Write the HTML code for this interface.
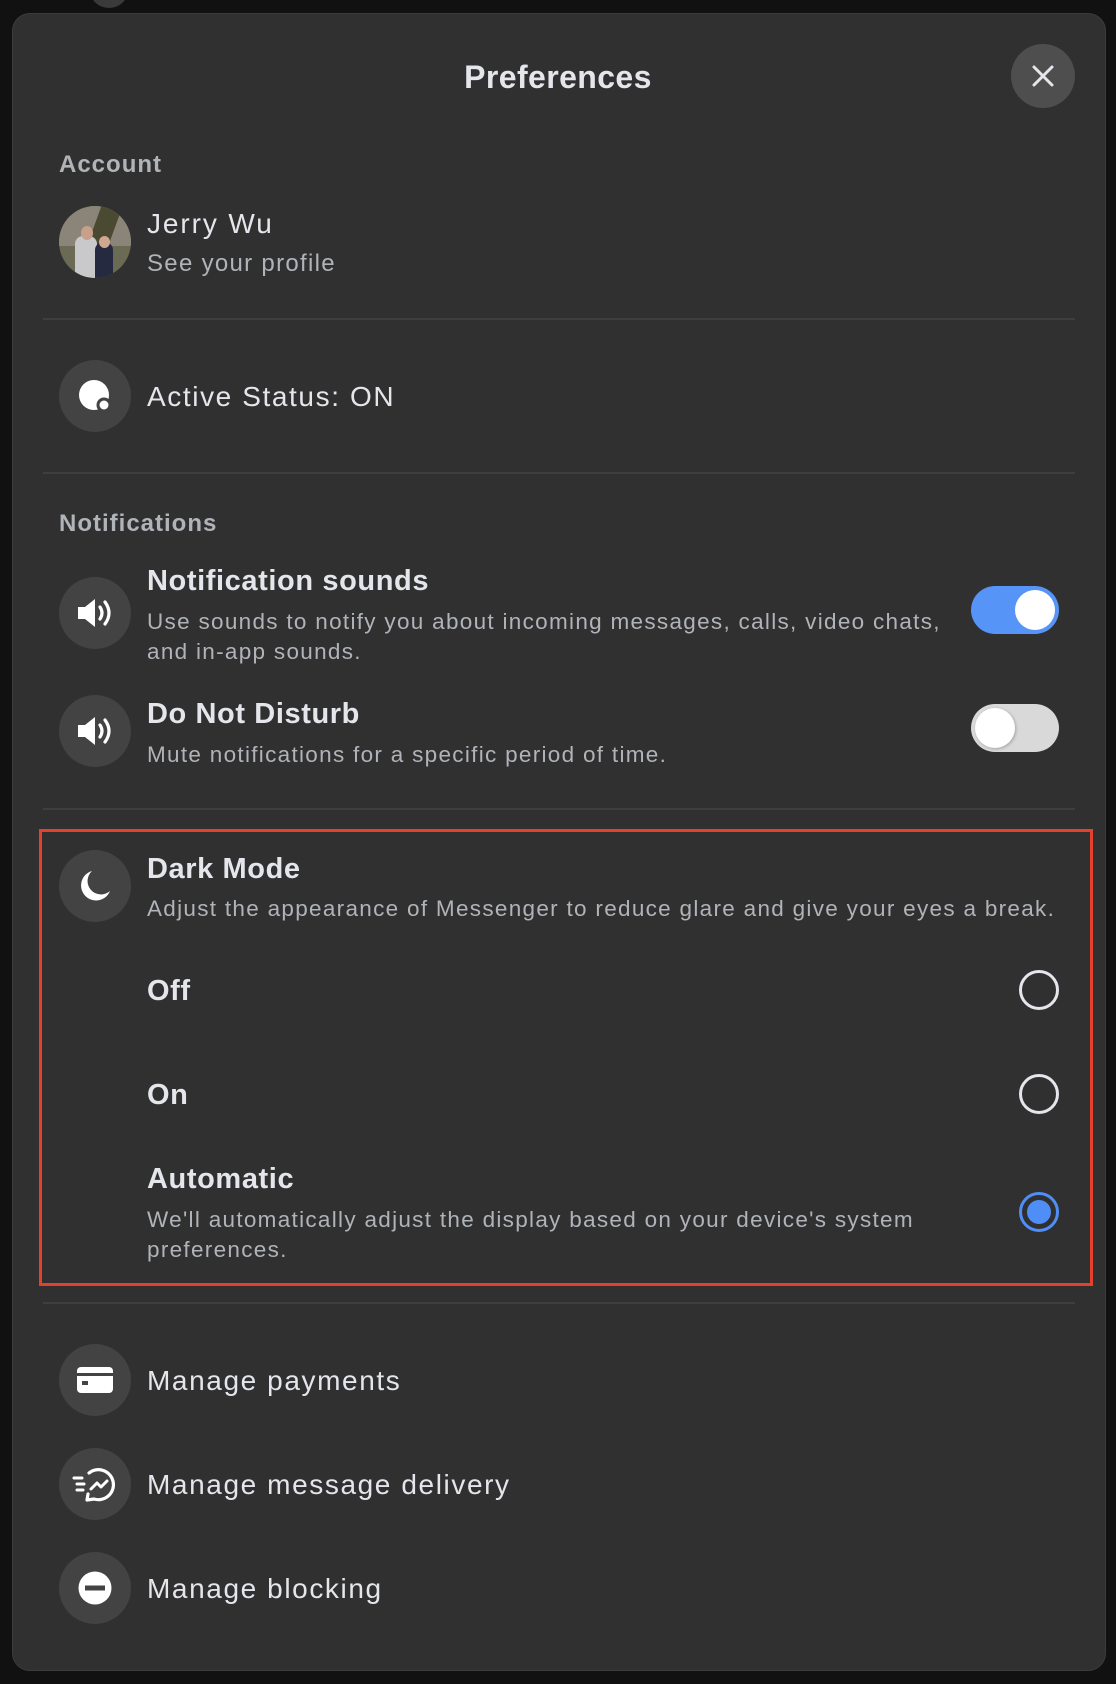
<!DOCTYPE html>
<html><head><meta charset="utf-8"><style>
*{margin:0;padding:0;box-sizing:border-box}
body{width:1116px;height:1684px;background:#111;font-family:"Liberation Sans",sans-serif;color:#e4e6eb;position:relative;overflow:hidden}
.abs{position:absolute}
.panel{left:12px;top:13px;width:1094px;height:1658px;background:#303030;border-radius:18px;border:1px solid #3c3c3c}
.ic{position:absolute;width:72px;height:72px;border-radius:50%;background:#434343;left:59px;display:flex;align-items:center;justify-content:center}
.t{position:absolute;left:147px;white-space:nowrap;line-height:1}
.h{font-size:29px;font-weight:bold;color:#e4e6eb;letter-spacing:0.6px}
.n{font-size:28px;color:#e4e6eb;letter-spacing:1.6px}
.d{font-size:22.5px;color:#b0b3b8;letter-spacing:1.3px}
.sec{font-size:24px;font-weight:bold;color:#b0b3b8;left:59px;letter-spacing:1px}
.div{position:absolute;left:43px;width:1032px;height:2px;background:#3e3e3e}
.radio{position:absolute;left:1019px;width:40px;height:40px;border-radius:50%;border:3px solid #e4e6eb}
</style></head><body>
<div class="abs" style="left:90px;top:-28px;width:38px;height:36px;border-radius:50%;background:#3a3a3a"></div>
<div class="abs panel"></div>

<div class="t" style="left:0;width:1116px;text-align:center;top:61px;font-size:32px;font-weight:bold;color:#e4e6eb;letter-spacing:0.4px">Preferences</div>
<div class="abs" style="left:1011px;top:44px;width:64px;height:64px;border-radius:50%;background:#4e4e4e;display:flex;align-items:center;justify-content:center">
<svg width="24" height="24" viewBox="0 0 24 24"><path d="M3 3L21 21M21 3L3 21" stroke="#e4e6eb" stroke-width="3" stroke-linecap="round"/></svg></div>

<div class="t sec" style="top:153px">Account</div>
<div class="abs" style="left:59px;top:206px;width:72px;height:72px;border-radius:50%;overflow:hidden;background:#6b6a55">
<div class="abs" style="left:0;top:0;width:72px;height:40px;background:#8a8578"></div>
<div class="abs" style="left:30px;top:0;width:20px;height:72px;background:#4a4a32;transform:rotate(20deg)"></div>
<div class="abs" style="left:16px;top:30px;width:22px;height:42px;background:#c9c9cc;border-radius:8px 8px 0 0"></div>
<div class="abs" style="left:22px;top:20px;width:12px;height:14px;background:#c8a08a;border-radius:50%"></div>
<div class="abs" style="left:36px;top:36px;width:18px;height:36px;background:#252a40;border-radius:8px 8px 0 0"></div>
<div class="abs" style="left:40px;top:30px;width:11px;height:12px;background:#d0a890;border-radius:50%"></div>
</div>
<div class="t n" style="top:210px;letter-spacing:1.9px">Jerry Wu</div>
<div class="t d" style="top:252px;font-size:24px">See your profile</div>
<div class="div" style="top:318px"></div>

<div class="ic" style="top:360px"><svg width="36" height="36" viewBox="0 0 36 36"><circle cx="17" cy="17" r="15" fill="#fff"/><circle cx="27" cy="27" r="7.5" fill="#434343"/><circle cx="27" cy="27" r="4.5" fill="#fff"/></svg></div>
<div class="t n" style="top:383px">Active Status: ON</div>
<div class="div" style="top:472px"></div>

<div class="t sec" style="top:512px">Notifications</div>
<div class="ic" style="top:577px"><svg width="40" height="36" viewBox="0 0 40 36"><path d="M3 12h7l10-8v28l-10-8H3z" fill="#fff"/><path d="M25 12q4 6 0 12M30 7q8 11 0 22" stroke="#fff" stroke-width="3.2" fill="none" stroke-linecap="round"/></svg></div>
<div class="t h" style="top:567px">Notification sounds</div>
<div class="t d" style="top:611px">Use sounds to notify you about incoming messages, calls, video chats,</div>
<div class="t d" style="top:641px">and in-app sounds.</div>
<div class="abs" style="left:971px;top:586px;width:88px;height:48px;border-radius:24px;background:#5794f7"></div>
<div class="abs" style="left:1015px;top:590px;width:40px;height:40px;border-radius:50%;background:#fff"></div>

<div class="ic" style="top:695px"><svg width="40" height="36" viewBox="0 0 40 36"><path d="M3 12h7l10-8v28l-10-8H3z" fill="#fff"/><path d="M25 12q4 6 0 12M30 7q8 11 0 22" stroke="#fff" stroke-width="3.2" fill="none" stroke-linecap="round"/></svg></div>
<div class="t h" style="top:700px">Do Not Disturb</div>
<div class="t d" style="top:744px">Mute notifications for a specific period of time.</div>
<div class="abs" style="left:971px;top:704px;width:88px;height:48px;border-radius:24px;background:#d9d9d9"></div>
<div class="abs" style="left:975px;top:708px;width:40px;height:40px;border-radius:50%;background:#fff;box-shadow:1px 1px 3px rgba(0,0,0,.25)"></div>
<div class="div" style="top:808px"></div>

<div class="abs" style="left:39px;top:829px;width:1054px;height:457px;border:3px solid #e5402b"></div>
<div class="ic" style="top:850px"><svg width="36" height="36" viewBox="0 0 36 36"><path d="M15 3A15 15 0 1 0 33 23A12 12 0 0 1 15 3z" fill="#fff"/></svg></div>
<div class="t h" style="top:855px">Dark Mode</div>
<div class="t d" style="top:898px">Adjust the appearance of Messenger to reduce glare and give your eyes a break.</div>
<div class="t h" style="top:977px">Off</div>
<div class="radio" style="top:970px"></div>
<div class="t h" style="top:1081px">On</div>
<div class="radio" style="top:1074px"></div>
<div class="t h" style="top:1165px">Automatic</div>
<div class="t d" style="top:1209px">We'll automatically adjust the display based on your device's system</div>
<div class="t d" style="top:1239px">preferences.</div>
<div class="radio" style="top:1192px;border-color:#4f8ef7;display:flex;align-items:center;justify-content:center"><div style="width:24px;height:24px;border-radius:50%;background:#4f8ef7"></div></div>
<div class="div" style="top:1302px"></div>

<div class="ic" style="top:1344px"><svg width="38" height="30" viewBox="0 0 38 30"><rect x="1" y="2" width="36" height="26" rx="4" fill="#fff"/><rect x="1" y="8" width="36" height="3" fill="#434343"/><rect x="6" y="16" width="6" height="4" fill="#434343"/></svg></div>
<div class="t n" style="top:1367px">Manage payments</div>

<div class="ic" style="top:1448px"><svg width="46" height="40" viewBox="0 0 46 40"><path d="M2 14h8M5 20h7M5 26h6" stroke="#fff" stroke-width="3" stroke-linecap="round"/><path d="M17 9A15 15 0 1 1 22 35L15 36L16 30" stroke="#fff" stroke-width="3.2" fill="none" stroke-linecap="round" stroke-linejoin="round"/><path d="M19 25l6-6 4 4 6-6" stroke="#fff" stroke-width="3" fill="none" stroke-linecap="round" stroke-linejoin="round"/></svg></div>
<div class="t n" style="top:1471px">Manage message delivery</div>

<div class="ic" style="top:1552px"><svg width="36" height="36" viewBox="0 0 36 36"><circle cx="18" cy="18" r="16.5" fill="#fff"/><rect x="8" y="15.5" width="20" height="5" fill="#434343"/></svg></div>
<div class="t n" style="top:1575px">Manage blocking</div>
</body></html>
